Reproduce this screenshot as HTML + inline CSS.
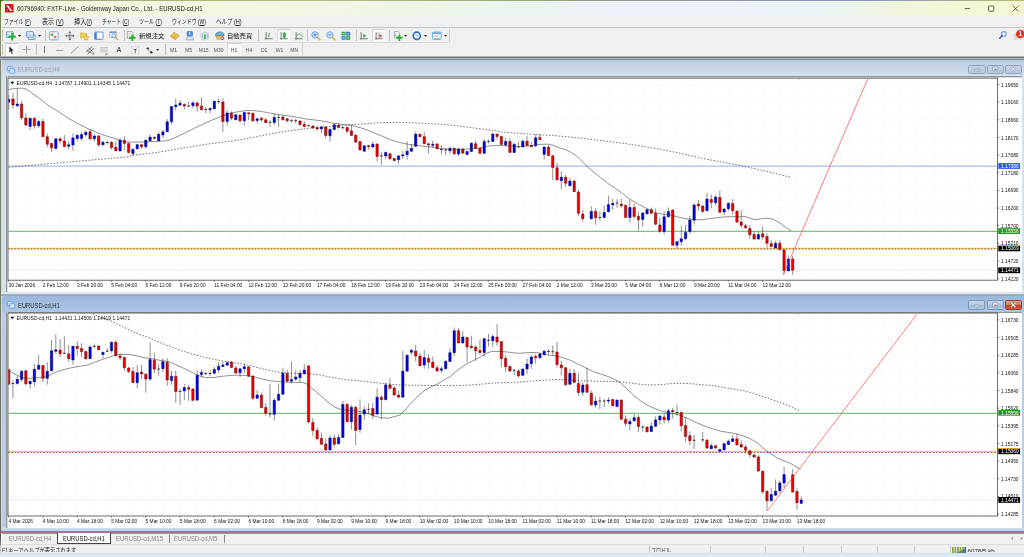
<!DOCTYPE html>
<html lang="ja"><head><meta charset="utf-8"><title>60796940: FXTF-Live - Goldenway Japan Co., Ltd. - EURUSD-cd,H1</title>
<style>
html,body{margin:0;padding:0;width:1024px;height:557px;overflow:hidden;background:#f0f0f0;}
#root{position:absolute;left:0;top:0;width:1024px;height:557px;overflow:hidden;font-family:'Liberation Sans',sans-serif;will-change:transform;}
.b{position:absolute;}
u{text-decoration:underline;text-decoration-thickness:0.5px;text-underline-offset:0.6px;}
.t{position:absolute;white-space:nowrap;transform-origin:0 50%;}
svg{position:absolute;overflow:visible;}
svg text{font-family:'Liberation Sans',sans-serif;}
</style></head><body><div id="root">
<div class="b" style="left:0px;top:0px;width:1024px;height:16.6px;background:linear-gradient(90deg,#f3f7df 0%,#f2f7e0 20%,#eef6e6 40%,#ebf4f0 50%,#eef1fa 62%,#edf2f8 72%,#e9f3f3 80%,#f0f6dc 88%,#f5f8d2 100%);"></div>
<div class="b" style="left:0px;top:0px;width:1024px;height:0.8px;background:linear-gradient(90deg,#9aa07a 0%,#b9bd8a 30%,#8f9a86 60%,#8e95c0 85%,#b8bc7c 100%);"></div>
<svg style="left:4.8px;top:3.8px" width="8.6" height="8.6" viewBox="0 0 16 16"><rect x="0" y="0" width="16" height="16" rx="1.8" fill="#d2121e"/><path d="M2.2 2.8h3.6l8 10.4h-3.600z" fill="#fff"/><path d="M10.800 3.400h2.600l-2 2.400zM2.600 12.600h2.600l-0.600-2.400z" fill="#f4b8bc"/></svg>
<span class="t" style="transform:scaleX(0.9307);left:17.2px;top:4.80px;font-size:6.5px;line-height:7.80px;color:#1a1a1a;font-family:'Liberation Sans',sans-serif;">60796940: FXTF-Live - Goldenway Japan Co., Ltd. - EURUSD-cd,H1</span>
<svg style="left:960px;top:-0.4px" width="64" height="17" viewBox="0 0 64 17"><path d="M4.7 8.6h5.2" stroke="#222" stroke-width="0.7" fill="none"/><rect x="28.6" y="6" width="5.2" height="5.2" rx="0.6" stroke="#222" stroke-width="0.7" fill="none"/><path d="M52.8 5.9l5.4 5.4M58.2 5.9l-5.4 5.4" stroke="#222" stroke-width="0.7" fill="none"/></svg>
<div class="b" style="left:0px;top:16.4px;width:1024px;height:10.8px;background:#f0f0f0;"></div>
<div class="b" style="left:0px;top:27.1px;width:1024px;height:0.7px;background:#c4c4c4;"></div>
<span class="t" style="transform:scaleX(0.7546);left:4.4px;top:18.26px;font-size:6.4px;line-height:7.68px;color:#222;font-family:'Liberation Sans','Noto Sans CJK JP',sans-serif;">ファイル (<u>F</u>)</span>
<span class="t" style="transform:scaleX(0.9483);left:41.6px;top:18.26px;font-size:6.4px;line-height:7.68px;color:#222;font-family:'Liberation Sans','Noto Sans CJK JP',sans-serif;">表示 (<u>V</u>)</span>
<span class="t" style="transform:scaleX(0.9605);left:73.8px;top:18.26px;font-size:6.4px;line-height:7.68px;color:#222;font-family:'Liberation Sans','Noto Sans CJK JP',sans-serif;">挿入(<u>I</u>)</span>
<span class="t" style="transform:scaleX(0.7492);left:101.9px;top:18.26px;font-size:6.4px;line-height:7.68px;color:#222;font-family:'Liberation Sans','Noto Sans CJK JP',sans-serif;">チャート (<u>C</u>)</span>
<span class="t" style="transform:scaleX(0.7863);left:139px;top:18.26px;font-size:6.4px;line-height:7.68px;color:#222;font-family:'Liberation Sans','Noto Sans CJK JP',sans-serif;">ツール (<u>T</u>)</span>
<span class="t" style="transform:scaleX(0.7696);left:172px;top:18.26px;font-size:6.4px;line-height:7.68px;color:#222;font-family:'Liberation Sans','Noto Sans CJK JP',sans-serif;">ウィンドウ (<u>W</u>)</span>
<span class="t" style="transform:scaleX(0.8612);left:216px;top:18.26px;font-size:6.4px;line-height:7.68px;color:#222;font-family:'Liberation Sans','Noto Sans CJK JP',sans-serif;">ヘルプ (<u>H</u>)</span>
<div class="b" style="left:0px;top:27.8px;width:1024px;height:28.2px;background:#f0f0f0;"></div>
<div class="b" style="left:0px;top:0px;width:1.3px;height:557px;background:linear-gradient(180deg,#4c6a16 0px,#5e7a2a 6px,#77874e 18px,#82876e 40px,#787d66 300px,#6a6f5a 527px);"></div>
<svg style="left:0;top:0" width="4" height="4" viewBox="0 0 4 4"><path d="M0 0h4c-1.600 0-3 1.400-3 3v1h-1z" fill="#4c6a16"/></svg>
<div class="b" style="left:1.1px;top:16.8px;width:1px;height:40px;background:#f4f4f4;"></div>
<div class="b" style="left:2px;top:41.6px;width:448px;height:0.5px;background:#dcdcdc;"></div>
<div class="b" style="left:449.4px;top:28.5px;width:0.6px;height:13.2px;background:#cfcfcf;"></div>
<div class="b" style="left:302px;top:42.5px;width:0.6px;height:13px;background:#d4d4d4;"></div>
<div class="b" style="left:2.3px;top:29.5px;width:0.7px;height:11px;background:#bdbdbd;"></div>
<div class="b" style="left:257.5px;top:29.5px;width:0.7px;height:11px;background:#bdbdbd;"></div>
<div class="b" style="left:2.3px;top:43.5px;width:0.7px;height:11px;background:#bdbdbd;"></div>
<div class="b" style="left:165px;top:43.5px;width:0.7px;height:11px;background:#bdbdbd;"></div>
<div class="b" style="left:45.3px;top:29.5px;width:0.6px;height:11px;background:#c2c2c2;"></div>
<div class="b" style="left:124px;top:29.5px;width:0.6px;height:11px;background:#c2c2c2;"></div>
<div class="b" style="left:307px;top:29.5px;width:0.6px;height:11px;background:#c2c2c2;"></div>
<div class="b" style="left:355.5px;top:29.5px;width:0.6px;height:11px;background:#c2c2c2;"></div>
<div class="b" style="left:389px;top:29.5px;width:0.6px;height:11px;background:#c2c2c2;"></div>
<div class="b" style="left:35.5px;top:43.8px;width:0.6px;height:11px;background:#bcbcbc;"></div>
<div class="b" style="left:276.5px;top:28.6px;width:13px;height:12.8px;background:#fafafa;border-top:0.6px solid #cfcfcf;border-left:0.6px solid #dadada;box-sizing:border-box;"></div>
<div class="b" style="left:372.3px;top:28.6px;width:13.2px;height:12.8px;background:#fafafa;border-top:0.6px solid #cfcfcf;border-left:0.6px solid #dadada;box-sizing:border-box;"></div>
<div class="b" style="left:5.3px;top:42.8px;width:12.8px;height:12.8px;background:#fafafa;border-top:0.6px solid #cfcfcf;border-left:0.6px solid #dadada;box-sizing:border-box;"></div>
<div class="b" style="left:227.3px;top:42.8px;width:13.4px;height:12.8px;background:#fafafa;border-top:0.6px solid #cfcfcf;border-left:0.6px solid #dadada;box-sizing:border-box;"></div>
<svg style="left:6.20px;top:30.65px" width="9.6" height="9.6" viewBox="0 0 18 18"><rect x="0.8" y="1.5" width="13" height="10.5" rx="1" fill="#eaf2fb" stroke="#3f7fc6" stroke-width="1.4"/><path d="M3 9V5M5 9V6" stroke="#6a8fb8" stroke-width="1"/><path d="M11.5 5.2v11M6 10.7h11" stroke="#1fb12a" stroke-width="3.6" stroke-linecap="round"/></svg>
<svg style="left:17.9px;top:34.7px" width="3.2" height="1.8" viewBox="0 0 32 18"><path d="M0 0h32l-16 18z" fill="#111"/></svg>
<svg style="left:26.00px;top:30.65px" width="9.6" height="9.6" viewBox="0 0 18 18"><rect x="4.5" y="6" width="12.5" height="10" rx="1" fill="#dbe8f7" stroke="#3f7fc6" stroke-width="1.3"/><rect x="0.8" y="1.3" width="13" height="10.3" rx="1" fill="#eaf2fb" stroke="#3f7fc6" stroke-width="1.4"/><path d="M3.5 9V5M6 9V6.5M8.5 9V5.5M11 9V7" stroke="#6a8fb8" stroke-width="1"/></svg>
<svg style="left:37.8px;top:34.7px" width="3.2" height="1.8" viewBox="0 0 32 18"><path d="M0 0h32l-16 18z" fill="#111"/></svg>
<svg style="left:49.20px;top:30.65px" width="9.6" height="9.6" viewBox="0 0 18 18"><rect x="1" y="1.5" width="16" height="15" rx="1.6" fill="#fff" stroke="#5b9bdc" stroke-width="1.6"/><path d="M5.5 4l3.5 3-3.5 3-3-3z" fill="#2fae3c"/><path d="M11 8l3.6 3.2L11 14.4 7.6 11.2z" fill="#ef7b45"/></svg>
<svg style="left:64.70px;top:30.65px" width="9.6" height="9.6" viewBox="0 0 18 18"><path d="M9 2.500v13M2.500 9h13" stroke="#4a4a4a" stroke-width="1.300"/><path d="M9 0.300l2.600 3.200H6.400zM9 17.700l2.600-3.200H6.400zM0.300 9l3.200-2.600v5.200zM17.700 9l-3.200-2.600v5.200z" fill="#4a4a4a"/><path d="M5 5l8 8M13 5l-8 8" stroke="#8a8a8a" stroke-width="0.800"/></svg>
<svg style="left:79.50px;top:30.65px" width="9.6" height="9.6" viewBox="0 0 18 18"><path d="M1 3.5h5l1.2 1.5H12v7H1z" fill="#f6d25a" stroke="#c9a227" stroke-width="0.9"/><path d="M3 12v4" stroke="#999" stroke-width="1"/><path d="M11.5 7l1.8 3.4 3.7.5-2.7 2.6.7 3.7-3.5-1.8L8 17.2l.7-3.7L6 10.9l3.7-.5z" fill="#f8d648" stroke="#c9981a" stroke-width="0.9"/></svg>
<svg style="left:93.80px;top:30.65px" width="9.6" height="9.6" viewBox="0 0 18 18"><rect x="1" y="2" width="16" height="14" rx="1.6" fill="#fdfdff" stroke="#4a8ad4" stroke-width="1.6"/><rect x="1.8" y="2.8" width="3.4" height="12.4" fill="#3f7fc6"/><path d="M6 12h10v3H6z" fill="#f3d9de"/></svg>
<svg style="left:108.80px;top:30.65px" width="9.6" height="9.6" viewBox="0 0 18 18"><rect x="1.5" y="1.5" width="12" height="10" fill="#f4f4f4" stroke="#8c8c8c" stroke-width="1.1"/><rect x="1.5" y="1.5" width="12" height="2.4" fill="#6d9bd0"/><circle cx="9" cy="9" r="3.6" fill="#e6f0fa" stroke="#4a86c8" stroke-width="1.3"/><path d="M11.8 11.8l4.5 4.5" stroke="#d39a2a" stroke-width="2.2" stroke-linecap="round"/></svg>
<svg style="left:125.80px;top:30.65px" width="9.6" height="9.6" viewBox="0 0 18 18"><path d="M2.5 1h8l3 3v10h-11z" fill="#fbfbfb" stroke="#7a7a7a" stroke-width="1.1"/><path d="M4.5 5h5M4.5 7.5h6M4.5 10h3" stroke="#aaa" stroke-width="0.9"/><path d="M12 8.2v9M7.5 12.7h9" stroke="#1fb12a" stroke-width="3.4" stroke-linecap="round"/></svg>
<span class="t" style="transform:scaleX(1.0421);left:139px;top:31.64px;font-size:6.1px;line-height:7.32px;color:#111;font-family:'Liberation Sans','Noto Sans CJK JP',sans-serif;">新規注文</span>
<svg style="left:170.20px;top:30.65px" width="9.6" height="9.6" viewBox="0 0 18 18"><path d="M1 10L8 2.5l9 5.5-7 8z" fill="#f2b632" stroke="#b57d12" stroke-width="1"/><path d="M1 10l9 6v-1.6L2.2 9.3z" fill="#fff3cf" stroke="#b57d12" stroke-width="0.7"/><path d="M5.5 8.5l4-4.2 5 3" stroke="#fbe08a" stroke-width="1.2" fill="none"/></svg>
<svg style="left:185.20px;top:30.65px" width="9.6" height="9.6" viewBox="0 0 18 18"><rect x="4" y="1" width="10" height="8.5" rx="1" fill="#4e8fdc" stroke="#2e68b4" stroke-width="1"/><text x="9" y="8" font-size="7" text-anchor="middle" fill="#fff" font-weight="700">1</text><path d="M1.5 16.5c0-4 3-6 7.5-6s7.500 2 7.500 6z" fill="#dfe9f6" stroke="#5a86bc" stroke-width="1"/></svg>
<svg style="left:200.20px;top:30.65px" width="9.6" height="9.6" viewBox="0 0 18 18"><circle cx="9" cy="9.500" r="7.500" fill="#dfeaf3" stroke="#9db4c8" stroke-width="1"/><path d="M9 6v9" stroke="#2e9e3a" stroke-width="2.6"/><path d="M5 6.500a5.500 5.500 0 0 0 0 6M13 6.500a5.500 5.500 0 0 1 0 6" stroke="#5a8fc4" stroke-width="1.2" fill="none"/></svg>
<svg style="left:214.80px;top:30.65px" width="9.6" height="9.6" viewBox="0 0 18 18"><path d="M1 7.500C1 3 5 1.500 9 1.500s8 1.500 8 6v2H1z" fill="#57a5e3" stroke="#2f77bd" stroke-width="0.9"/><path d="M2 9.500h14l-1.500 6h-11z" fill="#f2c53d" stroke="#b88b14" stroke-width="0.9"/><path d="M5 4l3 3 4-4" stroke="#f4d03f" stroke-width="1.5" fill="none"/><circle cx="13.600" cy="13.400" r="3.900" fill="#e03024" stroke="#fff" stroke-width="0.8"/><rect x="12.100" y="11.900" width="3" height="3" fill="#fff"/></svg>
<span class="t" style="transform:scaleX(1.0338);left:227.3px;top:31.64px;font-size:6.1px;line-height:7.32px;color:#111;font-family:'Liberation Sans','Noto Sans CJK JP',sans-serif;">自動売買</span>
<svg style="left:263.80px;top:30.65px" width="9.6" height="9.6" viewBox="0 0 18 18"><path d="M4 2v14M1.500 14.500h15" stroke="#5a5a5a" stroke-width="1.5"/><path d="M9.500 11V4.500M9.500 9.500H7.800M9.500 5.500h1.800" stroke="#2a9a38" stroke-width="1.5"/><path d="M1.500 14.500l2.500-2" stroke="#666" stroke-width="1"/></svg>
<svg style="left:278.60px;top:30.65px" width="9.6" height="9.6" viewBox="0 0 18 18"><path d="M4 2v14M1.500 14.500h15" stroke="#5a5a5a" stroke-width="1.5"/><path d="M10 1.500v13" stroke="#2a9a38" stroke-width="1"/><rect x="7.800" y="3.500" width="4.400" height="8.500" rx="1.200" fill="#2db53f" stroke="#1d8a2c" stroke-width="0.8"/></svg>
<svg style="left:293.60px;top:30.65px" width="9.6" height="9.6" viewBox="0 0 18 18"><path d="M4 2v14M1.500 14.500h15" stroke="#5a5a5a" stroke-width="1.500"/><path d="M4 11c2-4.500 5-6.500 7.500-5s3.500 3.500 5 5" stroke="#2aa63a" stroke-width="1.500" fill="none"/></svg>
<svg style="left:310.80px;top:30.65px" width="9.6" height="9.6" viewBox="0 0 18 18"><circle cx="7.500" cy="7.300" r="5.900" fill="#d6e8fa" stroke="#4f93df" stroke-width="1.500"/><path d="M4.300 7.300h6.400M7.500 4.100v6.400" stroke="#3a7fd0" stroke-width="1.700"/><path d="M12.200 12.000l4.300 4.300" stroke="#e3b341" stroke-width="3.400" stroke-linecap="round"/></svg>
<svg style="left:326.00px;top:30.65px" width="9.6" height="9.6" viewBox="0 0 18 18"><circle cx="7.500" cy="7.300" r="5.900" fill="#d6e8fa" stroke="#4f93df" stroke-width="1.500"/><path d="M4.300 7.300h6.400" stroke="#3a7fd0" stroke-width="1.700"/><path d="M12.200 12.000l4.300 4.300" stroke="#e3b341" stroke-width="3.400" stroke-linecap="round"/></svg>
<svg style="left:341.20px;top:30.65px" width="9.6" height="9.6" viewBox="0 0 18 18"><rect x="1" y="1.500" width="7.600" height="7" fill="#3fa84a"/><rect x="9.600" y="1.500" width="7.600" height="7" fill="#3a79cc"/><rect x="1" y="9.600" width="7.600" height="7" fill="#3f86d8"/><rect x="9.600" y="9.600" width="7.600" height="7" fill="#35a844"/><path d="M3 5h4M11.500 5h4M3 13h4M11.500 13h4" stroke="#dfeeff" stroke-width="1.300"/></svg>
<svg style="left:359.20px;top:30.65px" width="9.6" height="9.6" viewBox="0 0 18 18"><path d="M4 2v14M1.500 14.500h15" stroke="#5a5a5a" stroke-width="1.500"/><path d="M8 5l5.500 4L8 13z" fill="#2db53f"/></svg>
<svg style="left:374.20px;top:30.65px" width="9.6" height="9.6" viewBox="0 0 18 18"><path d="M4 2v14M1.500 14.500h15" stroke="#5a5a5a" stroke-width="1.500"/><path d="M9.500 3v10" stroke="#5a5a5a" stroke-width="1.500"/><path d="M11 6l4.500 3L11 12z" fill="#e0452c"/></svg>
<svg style="left:392.50px;top:30.65px" width="9.6" height="9.6" viewBox="0 0 18 18"><path d="M2.500 1h7l3 3v9h-10z" fill="#fbfbfb" stroke="#7a7a7a" stroke-width="1.100"/><path d="M5 4v6M4 9h6" stroke="#888" stroke-width="0.900"/><path d="M12 8.200v9M7.500 12.700h9" stroke="#1fb12a" stroke-width="3.400" stroke-linecap="round"/></svg>
<svg style="left:403.9px;top:34.7px" width="3.2" height="1.8" viewBox="0 0 32 18"><path d="M0 0h32l-16 18z" fill="#111"/></svg>
<svg style="left:412.20px;top:30.65px" width="9.6" height="9.6" viewBox="0 0 18 18"><circle cx="9" cy="9" r="6.800" fill="#eaf2fb" stroke="#2a6fc4" stroke-width="3.000"/><path d="M9 9L6.500 6.500M9 9h3" stroke="#777" stroke-width="1.100"/></svg>
<svg style="left:423.9px;top:34.7px" width="3.2" height="1.8" viewBox="0 0 32 18"><path d="M0 0h32l-16 18z" fill="#111"/></svg>
<svg style="left:432.20px;top:30.65px" width="9.6" height="9.6" viewBox="0 0 18 18"><rect x="1" y="2" width="16" height="14" rx="1.500" fill="#f2f7fc" stroke="#5b9bdc" stroke-width="1.500"/><rect x="1.800" y="2.800" width="14.400" height="2.600" fill="#5b9bdc"/><path d="M3.500 12l3-3 3 1.500 4.500-3" stroke="#e07a3a" stroke-width="1.100" fill="none"/><path d="M3.500 14h11" stroke="#49a84f" stroke-width="1.100"/></svg>
<svg style="left:443.59999999999997px;top:34.7px" width="3.2" height="1.8" viewBox="0 0 32 18"><path d="M0 0h32l-16 18z" fill="#111"/></svg>
<svg style="left:996px;top:28px" width="28" height="14" viewBox="0 0 28 14"><circle cx="7.900" cy="5.900" r="2.300" fill="#fbfbfb" stroke="#6f98e6" stroke-width="1.100"/><path d="M6.100 7.600L3.700 10.200" stroke="#2f62d4" stroke-width="1.500" stroke-linecap="round"/><path d="M18.300 6.200h5.500v4.500h-3.600l-1.300 1.500v-1.500h-0.600z" fill="#dcdcdc" stroke="#c2c2c2" stroke-width="0.400"/><circle cx="24.300" cy="6.000" r="4.300" fill="#df3420"/><text x="24.300" y="8.300" font-size="6.400" font-weight="700" text-anchor="middle" fill="#fff">1</text></svg>
<svg style="left:8.800px;top:45.600px" width="5" height="8.400" viewBox="0 0 10 17"><path d="M0.500 0.500v13l3-3 2.300 5.500 2-0.900-2.300-5.300h4.200z" fill="#333"/></svg>
<svg style="left:22px;top:45.200px" width="9" height="9" viewBox="0 0 18 18"><path d="M9 1v16" stroke="#777" stroke-width="1.300"/><path d="M1 9h16" stroke="#a8a8a8" stroke-width="2.000"/></svg>
<div class="b" style="left:44.1px;top:46.4px;width:0.7px;height:7px;background:#777;"></div>
<div class="b" style="left:56.4px;top:49.5px;width:6.6px;height:1.1px;background:#9c9c9c;"></div>
<svg style="left:70px;top:45px" width="9.500" height="9.500" viewBox="0 0 19 19"><path d="M2 16.500L17 3" stroke="#555" stroke-width="1.200"/></svg>
<svg style="left:84.500px;top:45px" width="10" height="10" viewBox="0 0 20 20"><path d="M2 14L15 3M5 18L18 7M3 10l10 6M7 6l8 7" stroke="#555" stroke-width="1.500"/><text x="15" y="20" font-size="6" fill="#333">E</text></svg>
<svg style="left:100px;top:45.500px" width="9" height="9.500" viewBox="0 0 18 19"><path d="M1 3h15M1 6h15M1 9h15M1 12h15" stroke="#999" stroke-width="1.400" stroke-dasharray="1.500 0.600"/><text x="11" y="19" font-size="6" fill="#333">F</text></svg>
<span class="t" style="left:116.6px;top:45.82px;font-size:6.8px;line-height:8.16px;color:#5a5a5a;font-family:'Liberation Sans',sans-serif;font-weight:700;">A</span>
<svg style="left:131px;top:45.500px" width="8.500" height="8.500" viewBox="0 0 17 17"><rect x="1.500" y="1.500" width="14" height="14" fill="#f8f8f8" stroke="#999" stroke-width="1" stroke-dasharray="2 1"/><text x="8.500" y="13" font-size="11" text-anchor="middle" fill="#444" font-weight="700">T</text></svg>
<svg style="left:144.500px;top:45.500px" width="9" height="9" viewBox="0 0 18 18"><path d="M2 5l4-3 3 4-3.500 1.500zM9 12l4-2.500 3 4-4 2z" fill="#444"/><path d="M6 8l5 3" stroke="#666" stroke-width="1"/></svg>
<svg style="left:155.9px;top:49.300000000000004px" width="3.2" height="1.8" viewBox="0 0 32 18"><path d="M0 0h32l-16 18z" fill="#111"/></svg>
<span class="t" style="left:173.6px;top:46.84px;font-size:5.1px;line-height:6.12px;color:#555;font-family:'Liberation Sans',sans-serif;transform:translateX(-50%);">M1</span>
<span class="t" style="left:188.6px;top:46.84px;font-size:5.1px;line-height:6.12px;color:#555;font-family:'Liberation Sans',sans-serif;transform:translateX(-50%);">M5</span>
<span class="t" style="left:203.7px;top:46.84px;font-size:5.1px;line-height:6.12px;color:#555;font-family:'Liberation Sans',sans-serif;transform:translateX(-50%);">M15</span>
<span class="t" style="left:218.7px;top:46.84px;font-size:5.1px;line-height:6.12px;color:#555;font-family:'Liberation Sans',sans-serif;transform:translateX(-50%);">M30</span>
<span class="t" style="left:234px;top:46.84px;font-size:5.1px;line-height:6.12px;color:#555;font-family:'Liberation Sans',sans-serif;transform:translateX(-50%);">H1</span>
<span class="t" style="left:249px;top:46.84px;font-size:5.1px;line-height:6.12px;color:#555;font-family:'Liberation Sans',sans-serif;transform:translateX(-50%);">H4</span>
<span class="t" style="left:264.2px;top:46.84px;font-size:5.1px;line-height:6.12px;color:#555;font-family:'Liberation Sans',sans-serif;transform:translateX(-50%);">D1</span>
<span class="t" style="left:279.5px;top:46.84px;font-size:5.1px;line-height:6.12px;color:#555;font-family:'Liberation Sans',sans-serif;transform:translateX(-50%);">W1</span>
<span class="t" style="left:294.2px;top:46.84px;font-size:5.1px;line-height:6.12px;color:#555;font-family:'Liberation Sans',sans-serif;transform:translateX(-50%);">MN</span>
<div class="b" style="left:0px;top:55.8px;width:1024px;height:4px;background:linear-gradient(180deg,#e0e0e0 0%,#8a8a8a 22%,#6e6e6e 36%,#9aa3ae 52%,#b4c0ce 70%,#7f8b99 88%,#aebccc 100%);"></div>
<div class="b" style="left:1.1px;top:59.5px;width:1023px;height:473px;background:#c9d8ea;"></div>
<div class="b" style="left:2px;top:59.7px;width:1022px;height:17px;background:linear-gradient(180deg,#bccbdf 0%,#c6d5e7 40%,#d4e1ef 100%);border-radius:2.500px 0 0 0;"></div>
<div class="b" style="left:2px;top:76.2px;width:1022px;height:215.40000000000003px;background:#d3e0ee;"></div>
<svg style="left:7.300px;top:65.7px" width="8" height="7.600" viewBox="0 0 16 15"><rect x="0.800" y="0.800" width="10.500" height="8.500" rx="1.500" fill="#e8f1fb" stroke="#4d8fdc" stroke-width="1.500"/><rect x="4.800" y="5.500" width="10.500" height="8.500" rx="1.500" fill="#e8f1fb" stroke="#4d8fdc" stroke-width="1.500"/><path d="M3 4h2M6.500 4h2M7 9.500h2M10.500 9.500h2" stroke="#4d8fdc" stroke-width="1.300"/></svg>
<span class="t" style="transform:scaleX(0.8971);left:17.9px;top:66.10px;font-size:6.5px;line-height:7.80px;color:#9aa3ad;font-family:'Liberation Sans',sans-serif;">EURUSD-cd,H4</span>
<div class="b" style="left:968.4px;top:64.60000000000001px;width:17.3px;height:9.8px;background:linear-gradient(180deg,#c4d2e4,#b7c8dd);border:0.600px solid #93a5bd;border-radius:1.800px;box-sizing:border-box;"></div>
<div class="b" style="left:986.7px;top:64.60000000000001px;width:17.3px;height:9.8px;background:linear-gradient(180deg,#c4d2e4,#b7c8dd);border:0.600px solid #93a5bd;border-radius:1.800px;box-sizing:border-box;"></div>
<div class="b" style="left:1004.9px;top:64.60000000000001px;width:17.3px;height:9.8px;background:linear-gradient(180deg,#c4d2e4,#b7c8dd);border:0.600px solid #93a5bd;border-radius:1.800px;box-sizing:border-box;"></div>
<svg style="left:968px;top:64.4px" width="54" height="10" viewBox="0 0 54 10"><rect x="6.300" y="5.200" width="5.600" height="1.800" rx="0.500" fill="#e4ebf4" stroke="#7a8ba3" stroke-width="0.600"/><rect x="24.600" y="2.800" width="5.200" height="4" rx="0.500" fill="#e4ebf4" stroke="#7a8ba3" stroke-width="0.600"/><path d="M26.200 4.600h2.400v1.400h-2.400z" fill="#7a8ba3"/><path d="M43 2.600l4.600 4.600M47.600 2.600L43 7.200" stroke="#8697ae" stroke-width="1.900"/><path d="M43 2.600l4.600 4.600M47.600 2.600L43 7.200" stroke="#e4ebf4" stroke-width="1.100"/></svg>
<div class="b" style="left:3.5px;top:58.9px;width:1021px;height:0.9px;background:#808b98;"></div>
<div class="b" style="left:1.1px;top:291.8px;width:1023px;height:2.2px;background:#dce7f4;"></div>
<div class="b" style="left:1.1px;top:293.9px;width:1023px;height:1.9px;background:linear-gradient(180deg,#aab3c0,#98a3b2);"></div>
<div class="b" style="left:2px;top:295.6px;width:1022px;height:17px;background:linear-gradient(180deg,#9ab7dc 0%,#a3bfe1 50%,#adc7e7 100%);border-radius:2.500px 0 0 0;"></div>
<div class="b" style="left:2px;top:312.1px;width:1022px;height:215.10000000000002px;background:#b9cde8;"></div>
<svg style="left:7.300px;top:301.0px" width="8" height="7.600" viewBox="0 0 16 15"><rect x="0.800" y="0.800" width="10.500" height="8.500" rx="1.500" fill="#e8f1fb" stroke="#4d8fdc" stroke-width="1.500"/><rect x="4.800" y="5.500" width="10.500" height="8.500" rx="1.500" fill="#e8f1fb" stroke="#4d8fdc" stroke-width="1.500"/><path d="M3 4h2M6.500 4h2M7 9.500h2M10.500 9.500h2" stroke="#4d8fdc" stroke-width="1.300"/></svg>
<span class="t" style="transform:scaleX(0.8971);left:17.9px;top:301.50px;font-size:6.5px;line-height:7.80px;color:#2e2e2e;font-family:'Liberation Sans',sans-serif;">EURUSD-cd,H1</span>
<div class="b" style="left:968.4px;top:300.3px;width:16.9px;height:9.4px;background:linear-gradient(180deg,#c3d6ec 0%,#b4cae4 48%,#9fbbdc 52%,#b0c8e4 100%);border:0.600px solid #7f96b4;border-radius:1.800px;box-sizing:border-box;"></div>
<div class="b" style="left:986.7px;top:300.3px;width:16.9px;height:9.4px;background:linear-gradient(180deg,#c3d6ec 0%,#b4cae4 48%,#9fbbdc 52%,#b0c8e4 100%);border:0.600px solid #7f96b4;border-radius:1.800px;box-sizing:border-box;"></div>
<div class="b" style="left:1004.9px;top:300.3px;width:16.9px;height:9.4px;background:linear-gradient(180deg,#eba08c 0%,#e07a62 45%,#cc4024 52%,#d4583c 100%);border:0.600px solid #8f4a3e;border-radius:1.800px;box-sizing:border-box;"></div>
<svg style="left:968px;top:300.1px" width="54" height="10" viewBox="0 0 54 10"><rect x="6.300" y="5.200" width="5.600" height="1.800" rx="0.500" fill="#f4f6fa" stroke="#6d7f99" stroke-width="0.600"/><rect x="24.600" y="2.800" width="5.200" height="4" rx="0.500" fill="#f4f6fa" stroke="#6d7f99" stroke-width="0.600"/><path d="M26.200 4.600h2.400v1.400h-2.400z" fill="#6d7f99"/><path d="M43 2.600l4.600 4.600M47.600 2.600L43 7.200" stroke="#8a4a40" stroke-width="1.900"/><path d="M43 2.600l4.600 4.600M47.600 2.600L43 7.200" stroke="#fff" stroke-width="1.100"/></svg>
<div class="b" style="left:6.3px;top:76.2px;width:1016.0px;height:215.40000000000003px;background:#fff;"></div>
<div class="b" style="left:6.3px;top:76.2px;width:1016.0px;height:1.7px;background:linear-gradient(180deg,#959595 0%,#959595 50%,#d8d8d8 62%,#dcdcdc 100%);"></div>
<div class="b" style="left:6.3px;top:76.2px;width:1.7px;height:215.40000000000003px;background:linear-gradient(90deg,#959595 0%,#959595 50%,#d8d8d8 62%,#dcdcdc 100%);"></div>
<div class="b" style="left:6.3px;top:311.6px;width:1016.0px;height:216.0px;background:#fff;"></div>
<div class="b" style="left:6.3px;top:311.6px;width:1016.0px;height:1.7px;background:linear-gradient(180deg,#959595 0%,#959595 50%,#d8d8d8 62%,#dcdcdc 100%);"></div>
<div class="b" style="left:6.3px;top:311.6px;width:1.7px;height:216.0px;background:linear-gradient(90deg,#959595 0%,#959595 50%,#d8d8d8 62%,#dcdcdc 100%);"></div>
<div class="b" style="left:1.2px;top:527.5px;width:1023px;height:3.4px;background:linear-gradient(180deg,#cfdff1 0%,#bcd2ec 100%);"></div>
<div class="b" style="left:1.2px;top:530.8px;width:1023px;height:1.6px;background:linear-gradient(180deg,#5aa4bb,#3d92aa);"></div>
<div class="b" style="left:1.2px;top:532.4px;width:1023px;height:1.7px;background:linear-gradient(180deg,#7c7c7c,#929292 70%,#c4c4c4);"></div>
<div class="b" style="left:0px;top:534.0px;width:1024px;height:10.2px;background:#f0f0f0;"></div>
<div class="b" style="left:1.1px;top:532.6px;width:0.8px;height:20px;background:#fafafa;"></div>
<div class="b" style="left:57.3px;top:532.5px;width:53.6px;height:11.2px;background:#fff;"></div>
<div class="b" style="left:57.3px;top:532.5px;width:0.9px;height:11.2px;background:#444;"></div>
<div class="b" style="left:110.0px;top:532.5px;width:0.9px;height:11.2px;background:#444;"></div>
<div class="b" style="left:57.3px;top:542.9px;width:53.6px;height:0.9px;background:#444;"></div>
<span class="t" style="transform:scaleX(0.9233);left:9.2px;top:534.86px;font-size:6.4px;line-height:7.68px;color:#8a8a8a;font-family:'Liberation Sans',sans-serif;">EURUSD-cd,H4</span>
<span class="t" style="transform:scaleX(0.9124);left:63px;top:534.86px;font-size:6.4px;line-height:7.68px;color:#111;font-family:'Liberation Sans',sans-serif;">EURUSD-cd,H1</span>
<span class="t" style="transform:scaleX(0.9385);left:116.2px;top:534.86px;font-size:6.4px;line-height:7.68px;color:#8a8a8a;font-family:'Liberation Sans',sans-serif;">EURUSD-cd,M15</span>
<span class="t" style="transform:scaleX(0.9327);left:174.4px;top:534.86px;font-size:6.4px;line-height:7.68px;color:#8a8a8a;font-family:'Liberation Sans',sans-serif;">EURUSD-cd,M5</span>
<div class="b" style="left:168.7px;top:535px;width:0.6px;height:7.5px;background:#8a8a8a;"></div>
<div class="b" style="left:224.4px;top:535px;width:0.6px;height:7.5px;background:#8a8a8a;"></div>
<svg style="left:1008px;top:535px" width="16" height="7" viewBox="0 0 16 7"><path d="M5.000 1.700v3.400L2.800 3.400z" fill="#a2a2a2"/><path d="M12.800 1.700v3.400l2.200-1.700z" fill="#a2a2a2"/></svg>
<div class="b" style="left:0px;top:544.2px;width:1024px;height:8.3px;background:#f0f0f0;"></div>
<div class="b" style="left:0px;top:544.2px;width:1024px;height:0.5px;background:#dcdcdc;"></div>
<div class="b" style="left:0;top:545px;width:1024px;height:7.400px;overflow:hidden;"><span class="t" style="transform:scaleX(0.8241);left:1.900px;top:1.900px;font-size:6.400px;line-height:8px;color:#222;font-family:'Liberation Sans','Noto Sans CJK JP',sans-serif;transform-origin:0 50%;">F1キーでヘルプが表示されます</span><span class="t" style="transform:scaleX(0.7824);left:651.200px;top:2.000px;font-size:6.400px;line-height:8px;color:#333;font-family:'Liberation Sans','Noto Sans CJK JP',sans-serif;">フロドル</span><span class="t" style="left:967.500px;top:2.000px;font-size:6.200px;line-height:8px;color:#222;font-family:'Liberation Sans',sans-serif;">6078/5 kb</span></div>
<div class="b" style="left:648.5px;top:546px;width:0.6px;height:7px;background:#c6c6c6;"></div>
<div class="b" style="left:710px;top:546px;width:0.6px;height:7px;background:#c6c6c6;"></div>
<div class="b" style="left:764.5px;top:546px;width:0.6px;height:7px;background:#c6c6c6;"></div>
<div class="b" style="left:802.5px;top:546px;width:0.6px;height:7px;background:#c6c6c6;"></div>
<div class="b" style="left:840.5px;top:546px;width:0.6px;height:7px;background:#c6c6c6;"></div>
<div class="b" style="left:877px;top:546px;width:0.6px;height:7px;background:#c6c6c6;"></div>
<div class="b" style="left:913.5px;top:546px;width:0.6px;height:7px;background:#c6c6c6;"></div>
<div class="b" style="left:949.5px;top:546px;width:0.6px;height:7px;background:#c6c6c6;"></div>
<svg style="left:951.500px;top:547px" width="14" height="6" viewBox="0 0 28 12"><rect x="0" y="0" width="3.500" height="12" fill="#8fa83a"/><rect x="5" y="0" width="3.500" height="12" fill="#8fa83a"/><rect x="10" y="0" width="3.500" height="12" fill="#8fa83a"/><rect x="15" y="0" width="3.500" height="12" fill="#8fa83a"/><rect x="20" y="0" width="3.500" height="12" fill="#7f9a4a"/><rect x="25" y="0" width="3" height="12" fill="#2d6f8f"/><path d="M8 12L28 3v9z" fill="#2d6f8f" opacity="0.700"/></svg>
<div class="b" style="left:0px;top:552.5px;width:1024px;height:4.5px;background:linear-gradient(180deg,#c9dbe9 0%,#d9e8f3 30%,#dcebf5 100%);"></div>
<svg style="left:0;top:0" width="1024" height="557" viewBox="0 0 1024 557"><defs><clipPath id="c78"><rect x="8.3" y="78.5" width="989.3000000000001" height="201.7"/></clipPath></defs><g clip-path="url(#c78)"><path d="M25.73 78.5V280.2M42.87 78.5V280.2M60.01 78.5V280.2M77.14 78.5V280.2M94.28 78.5V280.2M111.41 78.5V280.2M128.55 78.5V280.2M145.68 78.5V280.2M162.81 78.5V280.2M179.95 78.5V280.2M197.08 78.5V280.2M214.22 78.5V280.2M231.35 78.5V280.2M248.49 78.5V280.2M265.62 78.5V280.2M282.76 78.5V280.2M299.89 78.5V280.2M317.03 78.5V280.2M334.16 78.5V280.2M351.3 78.5V280.2M368.43 78.5V280.2M385.57 78.5V280.2M402.7 78.5V280.2M419.84 78.5V280.2M436.97 78.5V280.2M454.11 78.5V280.2M471.24 78.5V280.2M488.38 78.5V280.2M505.51 78.5V280.2M522.65 78.5V280.2M539.78 78.5V280.2M556.92 78.5V280.2M574.05 78.5V280.2M591.19 78.5V280.2M608.32 78.5V280.2M625.46 78.5V280.2M642.59 78.5V280.2M659.73 78.5V280.2M676.86 78.5V280.2M694 78.5V280.2M711.13 78.5V280.2M728.27 78.5V280.2M745.4 78.5V280.2M762.54 78.5V280.2M779.67 78.5V280.2M796.81 78.5V280.2M813.94 78.5V280.2M831.08 78.5V280.2M848.21 78.5V280.2M865.35 78.5V280.2M882.48 78.5V280.2M899.62 78.5V280.2M916.75 78.5V280.2M933.89 78.5V280.2M951.02 78.5V280.2M968.16 78.5V280.2M985.29 78.5V280.2M8.3 84.5H997.6M8.3 102.15H997.6M8.3 119.8H997.6M8.3 137.45H997.6M8.3 155.1H997.6M8.3 172.75H997.6M8.3 190.4H997.6M8.3 208.05H997.6M8.3 225.7H997.6M8.3 243.35H997.6M8.3 261H997.6M8.3 278.65H997.6" stroke="#dedef6" stroke-width="0.5" stroke-dasharray="1.07 2.14" fill="none"/><path d="M8.3 166.1H997.6" stroke="#a9bdf3" stroke-width="1.3"/><path d="M8.3 231.3H997.6" stroke="#4fa84f" stroke-width="0.9"/><path d="M8.3 248.3H997.6" stroke="#f7b23e" stroke-width="0.95"/><path d="M8.3 249.05H997.6" stroke="#2a2010" stroke-width="0.7" stroke-dasharray="1.6 1.6"/><path d="M8.3 270.3H997.6" stroke="#e4e4f7" stroke-width="0.7"/><path d="M8.7 95.05V109.87M12.98 92.91V108.61M17.27 88.51V107.36M21.55 101.08V119.92M25.84 113.64V125.95M30.12 117.41V130.22M34.4 117.16V128.71M38.69 120.17V128.09M42.97 118.41V137.26M47.26 133.49V147.31M51.54 142.53V152.33M55.82 138.51V148.81M60.11 137.51V143.16M64.39 134.99V147.31M68.68 141.28V149.44M72.96 133.49V150.7M77.24 134.37V141.28M81.53 132.23V140.9M85.81 130.85V136.88M90.1 129.34V139.77M94.38 134.37V141.53M98.66 134.99V146.93M102.95 140.65V145.67M107.23 140.9V144.42M111.52 141.28V149.44M115.8 141.28V151.08M120.08 138.51V151.33M124.37 136.23V150.3M128.65 142.51V153.44M132.94 147.79V155.95M137.22 143.77V149.67M141.5 143.39V148.79M145.79 139.25V148.79M150.07 134.22V141.51M154.36 136.23V139.25M158.64 132.09V141.26M162.92 130.45V138.37M167.21 119.15V132.09M171.49 106.08V124.55M175.78 98.54V110.35M180.06 100.05V106.33M184.34 103.19V109.47M188.63 101.93V106.96M192.91 100.68V108.22M197.2 101.93V111.61M201.48 97.29V110.35M205.76 106.96V113.24M210.05 106.96V113.24M214.33 100.68V109.1M218.62 98.54V104.07M222.9 98.17V131.83M227.18 110.1V125.8M231.47 111.36V120.15M235.75 113.87V120.15M240.04 114.47V123.27M244.32 111.96V125.78M248.6 112.59V120.13M252.89 112.59V122.01M257.17 117.61V123.27M261.46 116.98V121.63M265.74 118.24V123.27M270.02 120.13V127.04M274.31 113.84V124.9M278.59 114.47V127.04M282.88 115.73V120.75M287.16 117.61V122.64M291.44 118.87V122.64M295.73 118.87V123.27M300.01 120.13V125.78M304.3 121.38V127.41M308.58 124.52V126.41M312.86 125.15V128.92M317.15 126.41V130.8M321.43 125.78V133.32M325.72 126.41V138.34M330 128.29V141.73M334.28 123.89V130.18M338.57 123.64V128.67M342.85 126.41V129.55M347.14 126.66V133.32M351.42 125.15V135.83M355.7 133.94V142.99M359.99 140.85V150.28M364.27 145.2V151.73M368.56 144.95V149.6M372.84 141.43V147.71M377.12 143.32V161.53M381.41 152.49V164.67M385.69 151.23V158.39M389.98 152.74V159.65M394.26 157.76V161.28M398.54 155V163.79M402.83 150.85V159.02M407.11 141.43V159.65M411.4 144.2V152.11M415.68 131.38V147.09M419.96 133.27V137.41M424.25 131.76V143.94M428.53 143.32V153.37M432.82 140.8V147.71M437.1 143.32V149.22M441.38 145.2V154.25M445.67 148.34V155.25M449.95 146.46V153.99M454.24 147.46V155M458.52 147.71V155.88M462.8 148.34V153.74M467.09 150.85V155M471.37 142.06V152.11M475.66 140.8V148.97M479.94 147.71V153.99M484.22 138.87V153.94M488.51 139.5V143.27M492.79 133.22V142.39M497.08 133.59V139.5M501.36 136.11V145.15M505.64 137.61V146.41M509.93 138.24V152.94M514.21 143.27V152.94M518.5 142.01V147.91M522.78 139.5V147.41M527.06 135.73V146.16M531.35 141.13V147.16M535.63 134.47V147.04M539.92 134.47V139.87M544.2 146.41V159.6M548.48 145.15V156.21M552.77 155.2V180.33M557.05 162.74V180.95M561.34 171.28V189.5M565.62 174.8V187.61M569.9 177.56V186.61M574.19 180.08V192.01M578.47 190.13V215.88M582.76 210.23V221.78M591.32 206.21V219.27M595.61 208.34V224.67M599.89 211.48V220.53M604.18 205.45V218.39M608.46 195.78V212.49M612.74 198.92V209.6M617.03 199.17V207.71M621.31 198.29V207.71M625.6 204.2V217.76M629.88 199.55V222.54M634.16 203.94V219.02M638.45 212.11V230.33M642.73 211.98V226.43M647.02 208.59V214.5M651.3 207.59V214.12M655.58 208.59V225.18M659.87 217.89V232.96M664.15 211.11V234.6M668.44 207.59V217.89M672.72 209.47V245.53M677 240.88V248.04M681.29 225.8V245.9M685.57 224.92V240.25M689.86 215.75V233.97M694.14 203.19V224.55M698.42 199.8V211.11M702.71 205.08V213.24M706.99 192.76V211.36M711.28 194.4V208.22M715.56 195.28V205.7M719.84 190.63V212.86M724.13 208.22V215.13M728.41 202.56V210.73M732.7 199.05V214.5M736.98 210.73V223.29M741.26 209.97V228.19M745.55 223.79V228.82M749.83 225.05V238.87M754.12 231.33V239.5M758.4 231.33V239.5M762.68 226.93V239.5M766.97 233.22V247.66M771.25 240.13V247.04M775.54 240.75V248.29M779.82 240.13V250.8M784.1 249.17V274.3M788.39 255.2V271.28M792.67 255.83V274.67" stroke="#333" stroke-width="0.55" fill="none"/><path d="M105.88 142.53h2.7M187.28 106.02h2.7M204.41 109.47h2.7M217.27 101.62h2.7M268.67 122.32h2.7M277.24 117.3h2.7M290.09 120.75h2.7M294.38 120.75h2.7M307.23 125.72h2.7M341.5 127.66h2.7M380.06 155.94h2.7M440.03 149.54h2.7M444.32 149.91h2.7M487.16 141.44h2.7M517.15 146.91h2.7M598.54 217.45h2.7M615.68 203.07h2.7" stroke="#111" stroke-width="0.8" fill="none"/><path d="M11.78 98.94h2.4V105.1h-2.4zM20.35 103.96h2.4V117.66h-2.4zM24.64 118.04h2.4V124.94h-2.4zM33.2 118.29h2.4V125.82h-2.4zM41.77 121.55h2.4V136.63h-2.4zM46.06 136.63h2.4V144.17h-2.4zM50.34 143.54h2.4V147.81h-2.4zM58.91 138.76h2.4V140.9h-2.4zM63.19 141.03h2.4V146.55h-2.4zM88.9 131.85h2.4V138.76h-2.4zM97.46 136h2.4V144.67h-2.4zM110.32 142.28h2.4V147.56h-2.4zM114.6 147.31h2.4V150.7h-2.4zM123.17 140.25h2.4V143.39h-2.4zM127.45 143.39h2.4V152.44h-2.4zM140.3 144.65h2.4V146.78h-2.4zM153.16 137.49h2.4V138.49h-2.4zM183.14 104.45h2.4V106.08h-2.4zM196 102.94h2.4V106.08h-2.4zM200.28 106.08h2.4V109.72h-2.4zM221.7 101.93h2.4V121.41h-2.4zM230.27 113.24h2.4V118.27h-2.4zM238.84 115.1h2.4V120.75h-2.4zM247.4 112.84h2.4V113.84h-2.4zM251.69 113.22h2.4V120.75h-2.4zM260.26 118.24h2.4V119.87h-2.4zM264.54 119.87h2.4V122.64h-2.4zM281.68 116.98h2.4V119.5h-2.4zM285.96 118.87h2.4V120.75h-2.4zM298.81 121.01h2.4V124.52h-2.4zM303.1 124.27h2.4V126.41h-2.4zM311.66 126.03h2.4V128.04h-2.4zM315.95 127.66h2.4V128.92h-2.4zM324.52 127.04h2.4V135.45h-2.4zM337.37 125.15h2.4V127.41h-2.4zM345.94 127.41h2.4V131.18h-2.4zM350.22 130.8h2.4V135.45h-2.4zM354.5 135.2h2.4V142.11h-2.4zM358.79 141.48h2.4V149.9h-2.4zM367.36 145.58h2.4V146.71h-2.4zM375.92 143.94h2.4V156.51h-2.4zM388.78 153.74h2.4V158.77h-2.4zM393.06 158.39h2.4V160.53h-2.4zM418.76 134.27h2.4V136.66h-2.4zM423.05 136.66h2.4V143.69h-2.4zM427.33 143.69h2.4V144.95h-2.4zM435.9 143.94h2.4V148.72h-2.4zM453.04 148.34h2.4V153.74h-2.4zM461.6 148.97h2.4V153.12h-2.4zM474.46 143.69h2.4V148.34h-2.4zM478.74 148.34h2.4V153.37h-2.4zM495.88 134.1h2.4V136.61h-2.4zM500.16 136.61h2.4V144.52h-2.4zM508.73 141.38h2.4V152.44h-2.4zM525.86 141.13h2.4V145.53h-2.4zM530.15 145.53h2.4V146.78h-2.4zM538.72 137.61h2.4V139.5h-2.4zM547.28 147.04h2.4V155.58h-2.4zM551.57 155.83h2.4V167.51h-2.4zM555.85 167.76h2.4V179.7h-2.4zM564.42 177.31h2.4V183.22h-2.4zM572.99 181.08h2.4V191.63h-2.4zM577.27 192.01h2.4V213.37h-2.4zM581.56 213.99h2.4V218.77h-2.4zM594.41 211.23h2.4V217.76h-2.4zM620.11 204.2h2.4V205.83h-2.4zM624.4 205.45h2.4V217.51h-2.4zM632.96 207.46h2.4V216.51h-2.4zM637.25 216.26h2.4V219.65h-2.4zM650.1 209.85h2.4V213.24h-2.4zM654.38 213.24h2.4V224.17h-2.4zM658.67 224.92h2.4V231.21h-2.4zM671.52 210.1h2.4V245.28h-2.4zM697.22 204.07h2.4V206.08h-2.4zM701.51 206.08h2.4V211.36h-2.4zM710.08 199.42h2.4V202.56h-2.4zM718.64 197.29h2.4V212.24h-2.4zM731.5 203.57h2.4V210.73h-2.4zM735.78 211.11h2.4V222.04h-2.4zM740.06 221.91h2.4V225.3h-2.4zM744.35 225.68h2.4V227.81h-2.4zM748.63 228.57h2.4V234.85h-2.4zM752.92 234.47h2.4V239.12h-2.4zM761.48 233.84h2.4V236.98h-2.4zM765.77 236.61h2.4V243.27h-2.4zM770.05 243.64h2.4V246.41h-2.4zM778.62 243.27h2.4V249.55h-2.4zM782.9 249.92h2.4V270.53h-2.4zM791.47 258.97h2.4V270.28h-2.4z" fill="#f00000" stroke="#5a0000" stroke-width="0.45"/><path d="M7.5 99.19h2.4V102.08h-2.4zM16.07 103.96h2.4V105.85h-2.4zM28.92 118.29h2.4V126.45h-2.4zM37.49 121.55h2.4V125.82h-2.4zM54.62 138.76h2.4V148.44h-2.4zM67.48 144.79h2.4V146.3h-2.4zM71.76 137.88h2.4V145.05h-2.4zM76.04 135.37h2.4V138.39h-2.4zM80.33 134.62h2.4V138.39h-2.4zM84.61 132.23h2.4V134.74h-2.4zM93.18 136h2.4V138.76h-2.4zM101.75 142.28h2.4V144.79h-2.4zM118.88 140.02h2.4V150.95h-2.4zM131.74 149.42h2.4V153.44h-2.4zM136.02 144.65h2.4V148.79h-2.4zM144.59 140.25h2.4V146.78h-2.4zM148.87 137.11h2.4V140.63h-2.4zM157.44 134.22h2.4V140.88h-2.4zM161.72 131.83h2.4V134.97h-2.4zM166.01 121.66h2.4V131.83h-2.4zM170.29 106.58h2.4V121.66h-2.4zM174.58 105.08h2.4V106.71h-2.4zM178.86 103.19h2.4V105.08h-2.4zM191.71 102.94h2.4V105.7h-2.4zM208.85 108.59h2.4V109.85h-2.4zM213.13 101.31h2.4V108.84h-2.4zM225.98 112.99h2.4V121.41h-2.4zM234.55 114.75h2.4V119.77h-2.4zM243.12 112.59h2.4V120.75h-2.4zM255.97 118.87h2.4V120.38h-2.4zM273.11 117.36h2.4V122.39h-2.4zM320.23 127.04h2.4V128.92h-2.4zM328.8 129.55h2.4V135.83h-2.4zM333.08 124.77h2.4V129.55h-2.4zM363.07 145.83h2.4V151.23h-2.4zM371.64 144.2h2.4V147.09h-2.4zM384.49 152.49h2.4V155.88h-2.4zM397.34 155.88h2.4V159.65h-2.4zM401.63 154.87h2.4V155.88h-2.4zM405.91 151.23h2.4V154.87h-2.4zM410.2 148.34h2.4V151.23h-2.4zM414.48 134.27h2.4V146.21h-2.4zM431.62 144.2h2.4V145.45h-2.4zM448.75 148.34h2.4V150.85h-2.4zM457.32 148.97h2.4V153.99h-2.4zM465.89 151.48h2.4V154.62h-2.4zM470.17 143.32h2.4V151.48h-2.4zM483.02 141.38h2.4V153.32h-2.4zM491.59 134.1h2.4V141.38h-2.4zM504.44 141.38h2.4V144.9h-2.4zM513.01 144.15h2.4V152.44h-2.4zM521.58 141.13h2.4V147.04h-2.4zM534.43 137.86h2.4V145.78h-2.4zM543 147.04h2.4V154.32h-2.4zM560.14 177.31h2.4V180.7h-2.4zM568.7 181.08h2.4V185.73h-2.4zM590.12 211.48h2.4V218.77h-2.4zM602.98 212.49h2.4V217.51h-2.4zM607.26 204.57h2.4V211.73h-2.4zM611.54 203.32h2.4V204.95h-2.4zM628.68 207.46h2.4V217.51h-2.4zM641.53 212.99h2.4V219.52h-2.4zM645.82 209.72h2.4V213.87h-2.4zM662.95 216.76h2.4V231.46h-2.4zM667.24 211.61h2.4V216.76h-2.4zM675.8 241.76h2.4V245.28h-2.4zM680.09 238.74h2.4V241.76h-2.4zM684.37 232.46h2.4V238.74h-2.4zM688.66 219.9h2.4V231.46h-2.4zM692.94 205.08h2.4V220.15h-2.4zM705.79 199.05h2.4V210.73h-2.4zM714.36 196.91h2.4V202.81h-2.4zM722.93 209.1h2.4V211.98h-2.4zM727.21 203.19h2.4V208.84h-2.4zM757.2 234.47h2.4V239.12h-2.4zM774.34 243.27h2.4V247.91h-2.4zM787.19 258.97h2.4V270.9h-2.4z" fill="#0000f0" stroke="#00005a" stroke-width="0.45"/><polyline points="8.29,89.77 12.56,88.76 17.59,88.26 22.61,88.26 26.38,89.14 30.15,91.65 33.92,94.79 37.69,97.06 42.71,100.82 50.25,106.73 57.79,111.13 67.84,118.04 77.89,123.69 87.94,128.71 95.48,131.85 103.02,134.99 110.55,137.26 118.09,139.39 123.77,141.76 132.56,142.14 145.13,141.88 157.69,141.26 166.48,140.88 172.76,138.74 180.3,135.23 187.84,131.46 195.38,127.69 202.91,124.17 210.45,120.78 217.99,117.64 223.02,115.75 230.55,112.99 239.05,111.66 245.03,110.7 252.56,110.45 260.1,111.33 267.64,112.59 275.18,114.1 282.71,115.1 290.25,116.11 297.79,117.36 305.33,118.87 312.86,119.75 320.4,120.75 327.94,122.01 332.96,123.27 337.99,123.64 343.02,124.52 350.55,125.15 355.58,126.41 360,127.61 367.54,130.13 375.08,133.27 382.61,136.41 390.15,139.55 397.69,142.06 405.23,143.69 412.76,144.95 420.3,145.83 427.84,146.71 435.38,147.71 442.91,148.72 450.45,149.22 457.99,149.35 465.53,149.22 473.07,148.72 479.67,148 487.54,146.16 495.08,145.4 505.13,145.78 517.69,146.41 530.25,145.78 537.79,144.52 547.84,144.15 552.86,145.15 557.89,147.41 565.43,149.55 570.45,152.06 575.48,155.2 580.5,159.6 585.95,165.44 592.86,171.41 600.4,177.37 607.74,183.22 615.28,188.24 622.81,193.89 630.35,199.55 638.94,204.51 647.54,208.84 655.08,212.61 662.61,214.25 670.15,214.87 677.69,217.01 685.23,218.64 692.76,219.52 700.3,219.9 707.84,218.89 715.38,217.89 722.91,217.01 730.45,216.63 738.99,216.82 745.03,216.51 750.05,218.14 755.08,219.77 760.1,219.02 765.13,218.14 770.15,218.52 775.18,220.28 780.2,223.17 785.23,226.93 791.01,230.83" fill="none" stroke="#2b2b2b" stroke-width="0.52" stroke-linejoin="round"/><polyline points="8.75,167.25 60,162.8 127.4,156.9 132.6,155.3 157.7,152.4 182.8,148 207.9,144 233,140.9 248,138.4 265.1,134.9 290.3,130.6 315.4,127.4 340.5,125.5 360,124.1 375,123 397.7,122.3 416.5,123 437.9,124.1 455.5,125.5 470.6,127.6 488,129.7 505.1,132.3 530.3,134.2 555.4,135.7 580.5,138 600,140.4 619.7,142.8 639.5,145.7 659.2,149.1 679,153 698.7,157.6 718.5,161.5 738.2,165.1 758,169.4 777.7,174 790.5,177.3" fill="none" stroke="#222" stroke-width="0.62" stroke-dasharray="1.6 1.6"/><path d="M796.6 78.5h3.8l-1.900 2.200z" fill="#dcdcf6"/><path d="M783 275.05L867.8 78.5" stroke="#ff4040" stroke-width="0.68"/></g><rect x="8.0" y="78.15" width="989.6" height="202.05" fill="none" stroke="#505050" stroke-width="0.85"/><path d="M8.6 280.2v1.6M42.87 280.2v1.6M77.14 280.2v1.6M111.41 280.2v1.6M145.68 280.2v1.6M179.95 280.2v1.6M214.22 280.2v1.6M248.49 280.2v1.6M282.76 280.2v1.6M317.03 280.2v1.6M351.3 280.2v1.6M385.57 280.2v1.6M419.84 280.2v1.6M454.11 280.2v1.6M488.38 280.2v1.6M522.65 280.2v1.6M556.92 280.2v1.6M591.19 280.2v1.6M625.46 280.2v1.6M659.73 280.2v1.6M694 280.2v1.6M728.27 280.2v1.6M762.54 280.2v1.6" stroke="#333" stroke-width="0.6"/><path d="M997.6 84.5h1.6M997.6 102.1h1.6M997.6 119.8h1.6M997.6 137.5h1.6M997.6 155.1h1.6M997.6 172.8h1.6M997.6 190.4h1.6M997.6 208.1h1.6M997.6 225.7h1.6M997.6 243.4h1.6M997.6 261h1.6M997.6 278.7h1.6" stroke="#333" stroke-width="0.6"/><text x="8.5" y="287.1" font-size="4.85" fill="#111">30 Jan 2026</text><text x="42.77" y="287.1" font-size="4.85" fill="#111">2 Feb 12:00</text><text x="77.04" y="287.1" font-size="4.85" fill="#111">3 Feb 20:00</text><text x="111.31" y="287.1" font-size="4.85" fill="#111">5 Feb 04:00</text><text x="145.58" y="287.1" font-size="4.85" fill="#111">6 Feb 12:00</text><text x="179.85" y="287.1" font-size="4.85" fill="#111">9 Feb 20:00</text><text x="214.12" y="287.1" font-size="4.85" fill="#111">11 Feb 04:00</text><text x="248.39" y="287.1" font-size="4.85" fill="#111">12 Feb 12:00</text><text x="282.66" y="287.1" font-size="4.85" fill="#111">13 Feb 20:00</text><text x="316.93" y="287.1" font-size="4.85" fill="#111">17 Feb 04:00</text><text x="351.2" y="287.1" font-size="4.85" fill="#111">18 Feb 12:00</text><text x="385.47" y="287.1" font-size="4.85" fill="#111">19 Feb 20:00</text><text x="419.74" y="287.1" font-size="4.85" fill="#111">23 Feb 04:00</text><text x="454.01" y="287.1" font-size="4.85" fill="#111">24 Feb 12:00</text><text x="488.28" y="287.1" font-size="4.85" fill="#111">25 Feb 20:00</text><text x="522.55" y="287.1" font-size="4.85" fill="#111">27 Feb 04:00</text><text x="556.82" y="287.1" font-size="4.85" fill="#111">2 Mar 12:00</text><text x="591.09" y="287.1" font-size="4.85" fill="#111">3 Mar 20:00</text><text x="625.36" y="287.1" font-size="4.85" fill="#111">5 Mar 04:00</text><text x="659.63" y="287.1" font-size="4.85" fill="#111">6 Mar 12:00</text><text x="693.9" y="287.1" font-size="4.85" fill="#111">9 Mar 20:00</text><text x="728.17" y="287.1" font-size="4.85" fill="#111">11 Mar 04:00</text><text x="762.44" y="287.1" font-size="4.85" fill="#111">12 Mar 12:00</text><text x="1000.9" y="86.55" font-size="4.9" fill="#111">1.19650</text><text x="1000.9" y="104.15" font-size="4.9" fill="#111">1.19160</text><text x="1000.9" y="121.85" font-size="4.9" fill="#111">1.18660</text><text x="1000.9" y="139.55" font-size="4.9" fill="#111">1.18170</text><text x="1000.9" y="157.15" font-size="4.9" fill="#111">1.17680</text><text x="1000.9" y="174.85" font-size="4.9" fill="#111">1.17180</text><text x="1000.9" y="192.45" font-size="4.9" fill="#111">1.16690</text><text x="1000.9" y="210.15" font-size="4.9" fill="#111">1.16200</text><text x="1000.9" y="227.75" font-size="4.9" fill="#111">1.15700</text><text x="1000.9" y="245.45" font-size="4.9" fill="#111">1.15210</text><text x="1000.9" y="263.05" font-size="4.9" fill="#111">1.14720</text><text x="1000.9" y="280.75" font-size="4.9" fill="#111">1.14220</text><path d="M10.2 81.8h4.2l-2.1 2.5z" fill="#111"/><text x="16.6" y="84.8" font-size="4.95" fill="#111" xml:space="preserve">EURUSD-cd,H4  1.14787 1.14901 1.14345 1.14471</text></svg>
<svg style="left:0;top:0" width="1024" height="557" viewBox="0 0 1024 557"><rect x="998.3" y="163.1" width="21.8" height="5.8" fill="#2a5cf0"/><text x="1001.1" y="167.75" font-size="4.9" fill="#fff">1.17386</text><rect x="998.3" y="228.2" width="21.8" height="5.8" fill="#1f9a1f"/><text x="1001.1" y="232.85" font-size="4.9" fill="#fff">1.15556</text><rect x="998.3" y="245.5" width="21.8" height="5.8" fill="#000"/><rect x="998.3" y="245.2" width="21.8" height="0.8" fill="#f5a623"/><text x="1001.1" y="250.15" font-size="4.9" fill="#fff">1.15069</text><rect x="998.3" y="267.4" width="21.8" height="5.8" fill="#000"/><text x="1001.1" y="272.05" font-size="4.9" fill="#fff">1.14471</text></svg>
<svg style="left:0;top:0" width="1024" height="557" viewBox="0 0 1024 557"><defs><clipPath id="c313"><rect x="8.3" y="313.4" width="989.3000000000001" height="202.60000000000002"/></clipPath></defs><g clip-path="url(#c313)"><path d="M25.73 313.4V516M42.87 313.4V516M60.01 313.4V516M77.14 313.4V516M94.28 313.4V516M111.41 313.4V516M128.55 313.4V516M145.68 313.4V516M162.81 313.4V516M179.95 313.4V516M197.08 313.4V516M214.22 313.4V516M231.35 313.4V516M248.49 313.4V516M265.62 313.4V516M282.76 313.4V516M299.89 313.4V516M317.03 313.4V516M334.16 313.4V516M351.3 313.4V516M368.43 313.4V516M385.57 313.4V516M402.7 313.4V516M419.84 313.4V516M436.97 313.4V516M454.11 313.4V516M471.24 313.4V516M488.38 313.4V516M505.51 313.4V516M522.65 313.4V516M539.78 313.4V516M556.92 313.4V516M574.05 313.4V516M591.19 313.4V516M608.32 313.4V516M625.46 313.4V516M642.59 313.4V516M659.73 313.4V516M676.86 313.4V516M694 313.4V516M711.13 313.4V516M728.27 313.4V516M745.4 313.4V516M762.54 313.4V516M779.67 313.4V516M796.81 313.4V516M813.94 313.4V516M831.08 313.4V516M848.21 313.4V516M865.35 313.4V516M882.48 313.4V516M899.62 313.4V516M916.75 313.4V516M933.89 313.4V516M951.02 313.4V516M968.16 313.4V516M985.29 313.4V516M8.3 319.9H997.6M8.3 337.55H997.6M8.3 355.2H997.6M8.3 372.85H997.6M8.3 390.5H997.6M8.3 408.15H997.6M8.3 425.8H997.6M8.3 443.45H997.6M8.3 461.1H997.6M8.3 478.75H997.6M8.3 496.4H997.6M8.3 514.05H997.6" stroke="#dedef6" stroke-width="0.5" stroke-dasharray="1.07 2.14" fill="none"/><path d="M8.3 413.3H997.6" stroke="#4fa84f" stroke-width="0.9"/><path d="M8.3 451.7H997.6" stroke="#f7b23e" stroke-width="0.95"/><path d="M8.3 452.45H997.6" stroke="#2a2010" stroke-width="0.7" stroke-dasharray="1.6 1.6"/><path d="M8.3 499.9H997.6" stroke="#e4e4f7" stroke-width="0.7"/><path d="M8.7 368.94V384.65M12.98 380.25V398.47M17.27 375.85V384.65M21.55 370.45V381.51M25.84 370.2V385.28M30.12 379.62V388.79M34.4 363.92V386.53M38.69 355.13V369.95M42.97 364.92V382.14M47.26 362.04V384.65M51.54 340.05V371.21M55.82 334.4V353.87M60.11 339.05V357.01M64.39 336.53V353.87M68.68 345.08V361.41M72.96 345.7V364.55M77.24 341.31V355.75M81.53 343.19V357.01M85.81 350.73V359.52M90.1 345.33V359.15M94.38 343.57V348.22M98.66 345.33V350.1M102.95 351.61V358.27M107.23 348.22V351.98M111.52 341.56V352.61M115.8 340.68V356.13M120.08 353.24V360.15M124.37 356.36V370.8M128.65 367.04V373.32M132.94 367.04V382.99M137.22 364.9V388.39M141.5 364.9V378.97M145.79 373.32V392.79M150.07 342.29V381.23M154.36 352.59V373.32M158.64 364.15V375.45M162.92 358.24V372.06M167.21 358.24V385.88M171.49 370.8V384.62M175.78 370.8V402.84M180.06 389.02V404.97M184.34 384.25V400.08M188.63 385V400.95M192.91 387.76V401.33M197.2 370.43V401.58M201.48 369.55V377.09M205.76 372.06V375.2M210.05 370.18V375.83M214.33 367.04V373.94M218.62 362.01V372.69M222.9 362.01V367.04M227.18 361.13V365.78M231.47 361.13V367.91M235.75 365.78V373.69M240.04 367.84V377.01M244.32 363.57V373.24M248.6 365.7V376.63M252.89 375.13V400.25M257.17 390.2V398.99M261.46 392.74V408.57M265.74 403.17V415.73M270.02 383.69V417.61M274.31 398.14V420.75M278.59 383.67V401.26M282.88 367.84V394.97M287.16 370.1V382.04M291.44 361.06V383.67M295.73 370.35V380.78M300.01 370.1V382.04M304.3 363.82V374.5M308.58 365.48V423.27M312.86 418.24V436.46M317.15 427.41V440.23M321.43 432.44V445M325.72 438.34V450.53M330 435.2V450.28M334.28 434.57V447.51M338.57 434.2V444.62M342.85 401.03V437.96M347.14 402.79V422.01M351.42 405.05V429.55M355.7 405.68V445.25M359.99 399.4V432.69M364.27 406.31V420.13M368.56 403.54V413.84M372.84 402.79V419.12M377.12 388.34V415.1M381.41 395.25V419.5M385.69 382.69V400.28M389.98 378.29V389.6M394.26 385.83V395.5M398.54 390.85V397.76M402.83 351.03V397.51M407.11 354.42V371.63M411.4 349.02V354.8M415.68 345V361.33M419.96 353.17V366.36M424.25 350.03V368.62M428.53 354.42V368.87M432.82 356.46V368.39M437.1 365.25V371.78M441.38 366.51V372.79M445.67 360.48V369.27M449.95 348.29V362.11M454.24 327.56V355.83M458.52 328.19V343.64M462.8 331.08V343.64M467.09 336.98V362.11M471.37 335.73V348.92M475.66 345.78V360.85M479.94 339.5V354.57M484.22 337.61V356.46M488.51 333.84V346.41M492.79 334.47V347.04M497.08 324.05V345.78M501.36 340.75V367.14M505.64 355.45V372.16M509.93 365.25V372.16M514.21 369.02V375.3M518.5 369.02V377.56M522.78 368.39V375.93M527.06 358.34V373.79M531.35 355.2V368.77M535.63 354.57V363.37M539.92 352.69V358.34M544.2 349.92V355.83M548.48 348.92V354.57M552.77 345.7V355.13M557.05 341.93V367.44M561.34 360.78V375.23M565.62 367.06V385.9M569.9 368.94V385.03M574.19 369.2V383.02M578.47 373.34V395.95M582.76 382.49V395.68M587.04 367.66V392.79M591.32 390.65V405.73M595.61 396.56V407.61M599.89 396.56V409.12M604.18 398.82V406.98M608.46 397.31V403.84M612.74 399.07V406.36M617.03 399.45V407.36M621.31 399.45V419.92M625.6 415.15V426.21M629.88 418.29V430.48M634.16 413.64V421.68M638.45 414.52V432.11M642.73 425.45V431.73M647.02 426.46V432.49M651.3 422.06V432.11M655.58 416.41V427.09M659.87 415.15V424.57M664.15 413.27V423.32M668.44 408.87V422.69M672.72 407.86V418.67M677 404.47V415.78M681.29 411.63V431.48M685.57 417.41V441.53M689.86 431.33V445.15M694.14 435.1V448.92M702.71 431.96V442.01M706.99 438.87V448.67M711.28 443.64V449.17M715.56 444.9V449.17M719.84 448.92V451.43M724.13 442.64V450.43M728.41 439.5V445.15M732.7 435.1V442.01M736.98 433.84V445.4M741.26 440.13V447.91M745.55 444.9V453.32M749.83 450.18V457.46M754.12 453.94V457.71M758.4 455.63V471.58M762.68 470.33V493.94M766.97 490.43V510.9M771.25 487.91V501.23M775.54 479.5V495.83M779.82 480.75V492.69M784.1 466.56V488.29M792.67 469.07V492.69M796.96 488.29V509.65M801.24 496.46V503.74" stroke="#333" stroke-width="0.55" fill="none"/><path d="M11.63 383.58h2.7M63.04 353.3h2.7M93.03 346.33h2.7M105.88 351.17h2.7M157.29 369.05h2.7M178.71 391.34h2.7M204.41 373.51h2.7M208.7 373.51h2.7M268.67 414.03h2.7M367.21 409.45h2.7M487.16 340.31h2.7M512.86 370.4h2.7M547.13 351.49h2.7M551.42 351.73h2.7M598.54 401.02h2.7M602.83 401.02h2.7M641.38 427.09h2.7M675.65 412.45h2.7M692.79 440.31h2.7M701.36 439.81h2.7" stroke="#111" stroke-width="0.8" fill="none"/><path d="M7.5 369.57h2.4V384.27h-2.4zM24.64 370.83h2.4V383.77h-2.4zM41.77 365.55h2.4V378.37h-2.4zM58.91 350.1h2.4V353.87h-2.4zM67.48 353.87h2.4V358.64h-2.4zM76.04 346.33h2.4V348.47h-2.4zM80.33 348.59h2.4V351.61h-2.4zM84.61 351.61h2.4V358.89h-2.4zM97.46 346.08h2.4V349.72h-2.4zM114.6 342.31h2.4V355.75h-2.4zM118.88 356.01h2.4V357.64h-2.4zM123.17 357.61h2.4V367.66h-2.4zM127.45 367.91h2.4V371.43h-2.4zM131.74 371.43h2.4V382.49h-2.4zM140.3 372.06h2.4V373.94h-2.4zM144.59 374.2h2.4V378.97h-2.4zM153.16 360.13h2.4V369.17h-2.4zM166.01 362.39h2.4V379.97h-2.4zM174.58 376.21h2.4V391.53h-2.4zM187.43 387.51h2.4V389.27h-2.4zM191.71 389.02h2.4V400.33h-2.4zM230.27 362.01h2.4V367.41h-2.4zM234.55 367.91h2.4V373.07h-2.4zM247.4 366.96h2.4V376.13h-2.4zM251.69 376.13h2.4V398.37h-2.4zM260.26 395h2.4V407.56h-2.4zM264.54 407.56h2.4V413.22h-2.4zM285.96 373.62h2.4V381.16h-2.4zM307.38 365.85h2.4V422.01h-2.4zM311.66 422.39h2.4V430.43h-2.4zM315.95 430.43h2.4V438.72h-2.4zM320.23 438.34h2.4V444.25h-2.4zM324.52 443.99h2.4V450.03h-2.4zM333.08 437.96h2.4V444.25h-2.4zM345.94 404.42h2.4V421.63h-2.4zM354.5 407.31h2.4V430.43h-2.4zM371.64 408.44h2.4V415.35h-2.4zM380.21 397.14h2.4V399.65h-2.4zM388.78 384.95h2.4V388.34h-2.4zM393.06 387.96h2.4V395h-2.4zM397.34 395h2.4V397.14h-2.4zM414.48 351.03h2.4V356.06h-2.4zM418.76 356.06h2.4V365.73h-2.4zM427.33 358.19h2.4V362.34h-2.4zM431.62 362.11h2.4V367.51h-2.4zM435.9 367.76h2.4V370.9h-2.4zM457.32 330.7h2.4V342.89h-2.4zM465.89 337.61h2.4V347.04h-2.4zM470.17 346.16h2.4V347.66h-2.4zM474.46 347.04h2.4V350.8h-2.4zM478.74 350.43h2.4V352.44h-2.4zM495.88 336.98h2.4V342.01h-2.4zM500.16 341.63h2.4V358.72h-2.4zM504.44 358.34h2.4V366.76h-2.4zM508.73 366.51h2.4V370.9h-2.4zM517.3 370.9h2.4V375.93h-2.4zM534.43 356.21h2.4V357.71h-2.4zM555.85 351.98h2.4V364.55h-2.4zM560.14 364.92h2.4V367.69h-2.4zM564.42 367.69h2.4V384.65h-2.4zM572.99 373.34h2.4V382.51h-2.4zM577.27 383.39h2.4V392.56h-2.4zM585.84 384.75h2.4V392.29h-2.4zM590.12 393.17h2.4V404.85h-2.4zM611.54 399.45h2.4V405.73h-2.4zM620.11 400.08h2.4V419.17h-2.4zM624.4 419.17h2.4V423.32h-2.4zM637.25 417.41h2.4V426.46h-2.4zM645.82 427.09h2.4V431.73h-2.4zM662.95 417.04h2.4V419.92h-2.4zM671.52 410.5h2.4V411.63h-2.4zM680.09 412.39h2.4V425.83h-2.4zM684.37 425.45h2.4V436.51h-2.4zM688.66 435.73h2.4V440.75h-2.4zM705.79 440.13h2.4V447.91h-2.4zM714.36 445.78h2.4V447.91h-2.4zM735.78 438.87h2.4V444.9h-2.4zM740.06 444.52h2.4V447.04h-2.4zM744.35 447.04h2.4V450.18h-2.4zM748.63 450.8h2.4V454.57h-2.4zM752.92 454.95h2.4V457.09h-2.4zM757.2 456.88h2.4V471.08h-2.4zM761.48 471.33h2.4V491.68h-2.4zM765.77 491.18h2.4V500.85h-2.4zM791.47 474.85h2.4V492.06h-2.4zM795.76 491.43h2.4V502.74h-2.4z" fill="#f00000" stroke="#5a0000" stroke-width="0.45"/><path d="M16.07 379.37h2.4V383.39h-2.4zM20.35 371.21h2.4V379.62h-2.4zM28.92 381.51h2.4V383.77h-2.4zM33.2 369.2h2.4V381.88h-2.4zM37.49 365.18h2.4V369.32h-2.4zM46.06 371.21h2.4V378.37h-2.4zM50.34 350.73h2.4V370.83h-2.4zM54.62 349.85h2.4V351.36h-2.4zM71.76 346.33h2.4V359.9h-2.4zM88.9 346.96h2.4V358.64h-2.4zM101.75 352.36h2.4V354.5h-2.4zM110.32 342.31h2.4V350.73h-2.4zM136.02 372.69h2.4V382.74h-2.4zM148.87 359.5h2.4V378.97h-2.4zM161.72 361.63h2.4V368.67h-2.4zM170.29 376.21h2.4V380.48h-2.4zM183.14 387.51h2.4V390.9h-2.4zM196 375.2h2.4V400.08h-2.4zM200.28 372.44h2.4V374.57h-2.4zM213.13 369.55h2.4V373.32h-2.4zM217.42 366.16h2.4V369.92h-2.4zM221.7 364.9h2.4V366.41h-2.4zM225.98 362.64h2.4V365.15h-2.4zM238.84 368.84h2.4V372.86h-2.4zM243.12 366.71h2.4V368.84h-2.4zM255.97 394.97h2.4V398.37h-2.4zM273.11 400.28h2.4V414.47h-2.4zM277.39 394.22h2.4V400.25h-2.4zM281.68 373.24h2.4V394.22h-2.4zM290.24 379.52h2.4V381.16h-2.4zM294.53 377.01h2.4V379.15h-2.4zM298.81 373.62h2.4V377.64h-2.4zM303.1 370.1h2.4V373.87h-2.4zM328.8 437.96h2.4V450.03h-2.4zM337.37 437.46h2.4V443.74h-2.4zM341.65 404.42h2.4V437.46h-2.4zM350.22 407.31h2.4V421.63h-2.4zM358.79 415.1h2.4V429.55h-2.4zM363.07 409.82h2.4V414.1h-2.4zM375.92 397.14h2.4V414.1h-2.4zM384.49 384.95h2.4V399.65h-2.4zM401.63 371.13h2.4V397.14h-2.4zM405.91 355.3h2.4V371.13h-2.4zM410.2 350.28h2.4V352.29h-2.4zM423.05 357.56h2.4V365.1h-2.4zM440.18 368.77h2.4V370.28h-2.4zM444.47 361.23h2.4V368.77h-2.4zM448.75 352.69h2.4V361.48h-2.4zM453.04 330.7h2.4V352.69h-2.4zM461.6 336.98h2.4V342.89h-2.4zM483.02 338.87h2.4V352.44h-2.4zM491.59 336.61h2.4V340.75h-2.4zM521.58 369.02h2.4V375.3h-2.4zM525.86 363.99h2.4V369.02h-2.4zM530.15 357.09h2.4V363.74h-2.4zM538.72 353.94h2.4V357.71h-2.4zM543 351.18h2.4V354.57h-2.4zM568.7 373.34h2.4V384.27h-2.4zM581.56 385h2.4V392.29h-2.4zM594.41 401.08h2.4V405.1h-2.4zM607.26 400.08h2.4V401.08h-2.4zM615.83 400.08h2.4V406.61h-2.4zM628.68 421.43h2.4V423.94h-2.4zM632.96 417.66h2.4V420.8h-2.4zM650.1 426.21h2.4V431.48h-2.4zM654.38 419.92h2.4V426.21h-2.4zM658.67 416.16h2.4V419.92h-2.4zM667.24 410.75h2.4V419.92h-2.4zM710.08 445.78h2.4V448.67h-2.4zM718.64 449.55h2.4V451.18h-2.4zM722.93 443.64h2.4V449.92h-2.4zM727.21 441.13h2.4V444.52h-2.4zM731.5 438.87h2.4V441.38h-2.4zM770.05 494.57h2.4V500.85h-2.4zM774.34 491.18h2.4V495.2h-2.4zM778.62 482.89h2.4V490.8h-2.4zM782.9 474.47h2.4V482.89h-2.4zM800.04 499.97h2.4V503.37h-2.4z" fill="#0000f0" stroke="#00005a" stroke-width="0.45"/><polyline points="8.67,370.2 12.56,372.71 17.59,375.48 22.61,377.49 28.89,378.37 35.18,377.74 42.71,377.49 47.74,376.48 52.76,373.34 57.79,371.46 65.33,369.2 72.86,367.44 80.4,366.18 87.94,364.92 95.48,362.04 103.02,359.15 110.55,356.63 115.58,355.13 119.99,354.36 130.05,354.47 137.59,356.11 145.13,357.86 152.66,358.87 160.2,360.38 170.25,362.01 175.28,364.52 182.81,367.91 190.35,371.43 195.38,374.2 200.4,376.21 205.43,377.46 214.22,377.46 220.5,376.46 230.55,375.45 239.67,375.16 247.54,375.75 255.08,377.01 262.61,379.15 270.15,380.78 277.69,381.41 285.23,382.04 292.76,382.41 302.81,382.41 306.58,383.92 310.35,387.06 315.38,391.21 321.66,396.48 327.94,402.14 334.22,406.78 339.25,409.05 345.43,410.08 355.48,410.7 365.53,412.59 373.07,415.73 380.6,417.61 388.02,418.24 400.41,414.97 405.69,409.07 411.97,402.16 418.25,395.88 424.53,390.48 430.81,387.09 437.1,384.2 442.56,380.95 450.1,376.56 457.64,370.28 465.18,364.62 472.71,360.85 480.25,357.09 486.53,353.32 491.56,351.43 500.35,351.43 507.89,352.06 517.94,353.32 527.99,352.69 536.78,352.44 543.07,354.2 549.67,355.23 555.03,355.75 562.56,357.64 570.1,360.15 577.64,363.92 585.18,367.69 592.71,371.21 600.25,373.97 607.79,376.48 615.33,379.62 620.35,382.76 626.56,388.59 634.02,395.68 640.3,400.7 647.84,405.35 655.38,408.87 662.91,411.38 670.45,413.27 677.99,414.52 685.53,417.66 690,419.4 697.54,423.17 705.08,426.31 712.61,428.82 720.15,431.08 727.69,432.34 735.23,433.59 742.76,435.73 750.3,438.62 757.84,443.27 762.86,447.91 767.89,452.06 772.91,455.2 777.94,458.34 785.48,461.48 790.5,463.37 795.53,466.51 800.55,469.27" fill="none" stroke="#2b2b2b" stroke-width="0.52" stroke-linejoin="round"/><polyline points="92.5,314 110,320.6 135,332.5 141.4,335 151.4,338.8 161.5,343.2 171.5,346.9 181.6,350.7 191.6,353.8 201.7,356.6 211.7,358.9 221.8,360.8 231.8,362.4 241.9,363.9 252.6,366.3 265.1,369.5 277.7,372 290.3,373.2 307.8,373.4 320.4,375.1 333,377.6 345.5,379.5 358.1,380.8 368,381.7 380.6,383.3 393.1,384.6 405.7,385.2 430.8,385.5 455.9,385.6 468.5,385.2 481.1,384.2 496,382.9 517.9,382.2 543.1,380.3 558,379.4 575.1,380.5 600.3,381.3 612.8,381.5 625.4,382.5 637.9,384 648,384.9 660,384.8 669.4,383.75 680.3,383.3 691.25,383.75 703.75,384.8 716.25,386.1 728.75,388.3 741.25,390.3 753.75,393.4 766.25,397.7 778.75,402 791.25,406.7 799.8,410.6" fill="none" stroke="#222" stroke-width="0.62" stroke-dasharray="1.6 1.6"/><path d="M796.6 313.4h3.8l-1.900 2.200z" fill="#dcdcf6"/><path d="M767.3 510.9L916.8 314.4" stroke="#ff4040" stroke-width="0.68"/></g><rect x="8.0" y="313.05" width="989.6" height="202.95" fill="none" stroke="#505050" stroke-width="0.85"/><path d="M8.6 516v1.6M42.87 516v1.6M77.14 516v1.6M111.41 516v1.6M145.68 516v1.6M179.95 516v1.6M214.22 516v1.6M248.49 516v1.6M282.76 516v1.6M317.03 516v1.6M351.3 516v1.6M385.57 516v1.6M419.84 516v1.6M454.11 516v1.6M488.38 516v1.6M522.65 516v1.6M556.92 516v1.6M591.19 516v1.6M625.46 516v1.6M659.73 516v1.6M694 516v1.6M728.27 516v1.6M762.54 516v1.6M796.81 516v1.6" stroke="#333" stroke-width="0.6"/><path d="M997.6 319.9h1.6M997.6 337.55h1.6M997.6 355.2h1.6M997.6 372.85h1.6M997.6 390.5h1.6M997.6 408.15h1.6M997.6 425.8h1.6M997.6 443.45h1.6M997.6 461.1h1.6M997.6 478.75h1.6M997.6 496.4h1.6M997.6 514.05h1.6" stroke="#333" stroke-width="0.6"/><text x="8.5" y="522.9" font-size="4.85" fill="#111">4 Mar 2026</text><text x="42.77" y="522.9" font-size="4.85" fill="#111">4 Mar 10:00</text><text x="77.04" y="522.9" font-size="4.85" fill="#111">4 Mar 18:00</text><text x="111.31" y="522.9" font-size="4.85" fill="#111">5 Mar 02:00</text><text x="145.58" y="522.9" font-size="4.85" fill="#111">5 Mar 10:00</text><text x="179.85" y="522.9" font-size="4.85" fill="#111">5 Mar 18:00</text><text x="214.12" y="522.9" font-size="4.85" fill="#111">6 Mar 02:00</text><text x="248.39" y="522.9" font-size="4.85" fill="#111">6 Mar 10:00</text><text x="282.66" y="522.9" font-size="4.85" fill="#111">6 Mar 18:00</text><text x="316.93" y="522.9" font-size="4.85" fill="#111">9 Mar 02:00</text><text x="351.2" y="522.9" font-size="4.85" fill="#111">9 Mar 10:00</text><text x="385.47" y="522.9" font-size="4.85" fill="#111">9 Mar 18:00</text><text x="419.74" y="522.9" font-size="4.85" fill="#111">10 Mar 02:00</text><text x="454.01" y="522.9" font-size="4.85" fill="#111">10 Mar 10:00</text><text x="488.28" y="522.9" font-size="4.85" fill="#111">10 Mar 18:00</text><text x="522.55" y="522.9" font-size="4.85" fill="#111">11 Mar 02:00</text><text x="556.82" y="522.9" font-size="4.85" fill="#111">11 Mar 10:00</text><text x="591.09" y="522.9" font-size="4.85" fill="#111">11 Mar 18:00</text><text x="625.36" y="522.9" font-size="4.85" fill="#111">12 Mar 02:00</text><text x="659.63" y="522.9" font-size="4.85" fill="#111">12 Mar 10:00</text><text x="693.9" y="522.9" font-size="4.85" fill="#111">12 Mar 18:00</text><text x="728.17" y="522.9" font-size="4.85" fill="#111">13 Mar 02:00</text><text x="762.44" y="522.9" font-size="4.85" fill="#111">13 Mar 10:00</text><text x="796.71" y="522.9" font-size="4.85" fill="#111">13 Mar 18:00</text><text x="1000.9" y="321.95" font-size="4.9" fill="#111">1.16730</text><text x="1000.9" y="339.6" font-size="4.9" fill="#111">1.16505</text><text x="1000.9" y="357.25" font-size="4.9" fill="#111">1.16285</text><text x="1000.9" y="374.9" font-size="4.9" fill="#111">1.16060</text><text x="1000.9" y="392.55" font-size="4.9" fill="#111">1.15840</text><text x="1000.9" y="410.2" font-size="4.9" fill="#111">1.15620</text><text x="1000.9" y="427.85" font-size="4.9" fill="#111">1.15395</text><text x="1000.9" y="445.5" font-size="4.9" fill="#111">1.15175</text><text x="1000.9" y="463.15" font-size="4.9" fill="#111">1.14950</text><text x="1000.9" y="480.8" font-size="4.9" fill="#111">1.14730</text><text x="1000.9" y="498.45" font-size="4.9" fill="#111">1.14510</text><text x="1000.9" y="516.1" font-size="4.9" fill="#111">1.14285</text><path d="M10.2 316.7h4.2l-2.1 2.5z" fill="#111"/><text x="16.6" y="319.7" font-size="4.95" fill="#111" xml:space="preserve">EURUSD-cd,H1  1.14431 1.14506 1.14419 1.14471</text></svg>
<svg style="left:0;top:0" width="1024" height="557" viewBox="0 0 1024 557"><rect x="998.3" y="409.9" width="21.8" height="5.8" fill="#1f9a1f"/><text x="1001.1" y="414.55" font-size="4.9" fill="#fff">1.15556</text><rect x="998.3" y="448.4" width="21.8" height="5.8" fill="#000"/><rect x="998.3" y="448.1" width="21.8" height="0.8" fill="#f5a623"/><text x="1001.1" y="453.05" font-size="4.9" fill="#fff">1.15069</text><rect x="998.3" y="497" width="21.8" height="5.8" fill="#000"/><text x="1001.1" y="501.65" font-size="4.9" fill="#fff">1.14471</text></svg>
<div class="b" style="left:0px;top:527px;width:1.2px;height:19px;background:linear-gradient(180deg,#62665a 0%,#5c5c5c 70%,#9a9a9a 100%);"></div>
<div class="b" style="left:0px;top:546px;width:1.2px;height:6.5px;background:#c8c8c8;"></div>
</div></body></html>
